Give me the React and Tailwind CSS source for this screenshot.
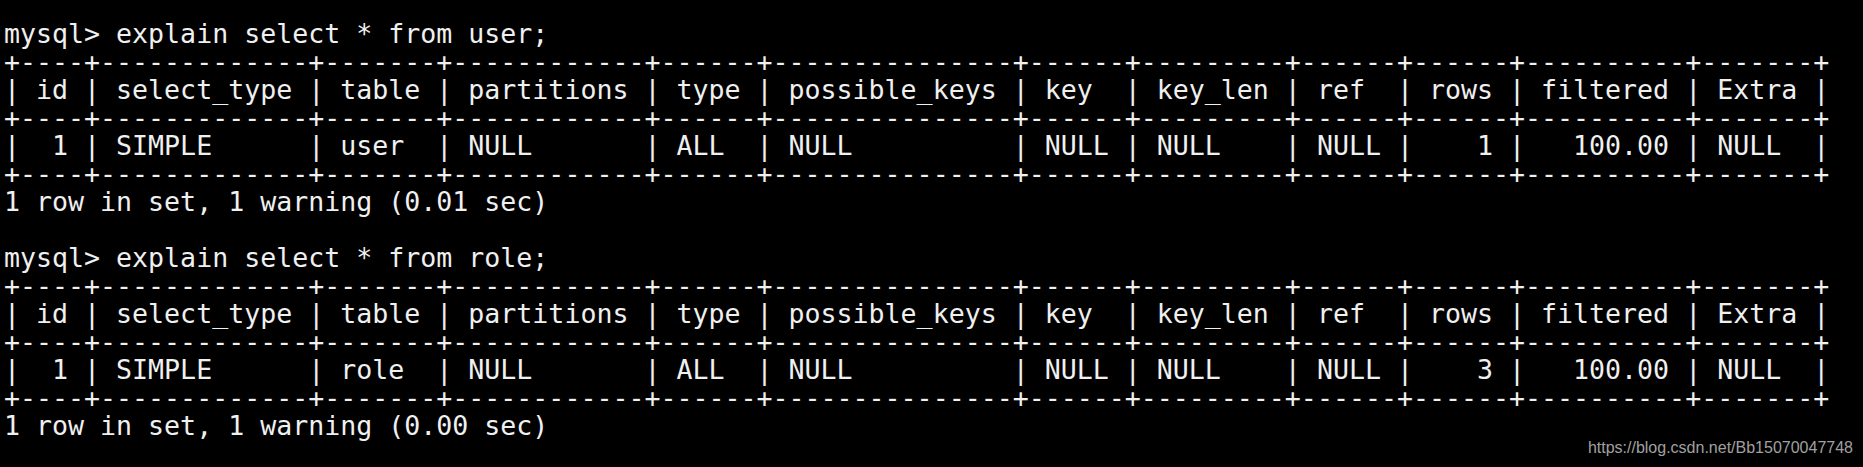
const border =
  "+----+-------------+-------+------------+------+---------------+------+---------+------+------+----------+-------+"
const header =
  "| id | select_type | table | partitions | type | possible_keys | key  | key_len | ref  | rows | filtered | Extra |"

const queries = [
  {
    cmd: "mysql> explain select * from user;",
    row: "|  1 | SIMPLE      | user  | NULL       | ALL  | NULL          | NULL | NULL    | NULL |    1 |   100.00 | NULL  |",
    footer: "1 row in set, 1 warning (0.01 sec)",
  },
  {
    cmd: "mysql> explain select * from role;",
    row: "|  1 | SIMPLE      | role  | NULL       | ALL  | NULL          | NULL | NULL    | NULL |    3 |   100.00 | NULL  |",
    footer: "1 row in set, 1 warning (0.00 sec)",
  },
]

function Line({ children }) {
  return <div className="h-[28px] whitespace-pre">{children || " "}</div>
}

export default function App() {
  return (
    <div className="relative w-full h-[467px] bg-black overflow-hidden">
      <div className="pt-[20px] pl-[4px] font-['DejaVu_Sans_Mono',monospace] text-[26.6px] leading-[28px] text-[#f0f0f0]">
        {queries.map((q, i) => (
          <div key={i}>
            <Line>{q.cmd}</Line>
            <Line>{border}</Line>
            <Line>{header}</Line>
            <Line>{border}</Line>
            <Line>{q.row}</Line>
            <Line>{border}</Line>
            <Line>{q.footer}</Line>
            {i === 0 && <Line />}
          </div>
        ))}
      </div>
      <div className="absolute right-[10px] bottom-[9px] font-['Liberation_Sans',Arial,sans-serif] text-[16px] leading-[20px] text-[#a0a0a0]">
        https://blog.csdn.net/Bb15070047748
      </div>
    </div>
  )
}
